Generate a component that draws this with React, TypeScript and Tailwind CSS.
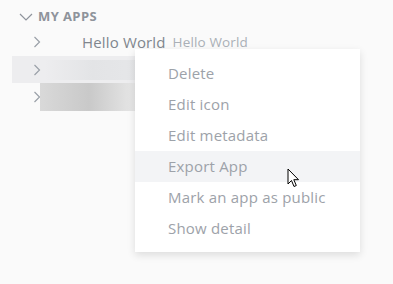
import React from "react";

const ChevronRight = () => (
  <svg width="8" height="12" viewBox="0 0 8 12" fill="none" stroke="#9aa0a8" strokeWidth="1.2">
    <path d="M1.5 1 L6.5 6 L1.5 11" />
  </svg>
);

const ChevronDown = () => (
  <svg width="14" height="8" viewBox="0 0 14 8" fill="none" stroke="#8f949c" strokeWidth="1.2">
    <path d="M1 1 L7 7 L13 1" />
  </svg>
);

const Cursor = () => (
  <svg width="14" height="21" viewBox="0 0 14 21">
    <path
      d="M1 1 L1 16 L4.5 12.5 L7 18.5 L9.3 17.5 L6.8 11.7 L11.5 11.7 Z"
      fill="white"
      stroke="black"
      strokeWidth="1"
      strokeLinejoin="round"
    />
  </svg>
);

const items = ["Delete", "Edit icon", "Edit metadata", "Export App", "Mark an app as public", "Show detail"];

export default function App() {
  return (
    <div
      className="relative w-[393px] h-[284px] bg-[#fafafa] overflow-hidden"
      style={{ fontFamily: '"Open Sans", "Noto Sans", sans-serif' }}
    >
      <div className="flex flex-col pt-[6px]">
        <div className="flex items-center h-[22px] pl-[19px] gap-[5px]">
          <ChevronDown />
          <span className="text-[13px] font-bold text-[#8e939b] tracking-[0.4px]">MY APPS</span>
        </div>
        <div className="flex items-center h-[28px] pl-[33px]">
          <ChevronRight />
          <span className="ml-[41px] text-[15px] tracking-[0.15px] text-[#80868e]">Hello World</span>
          <span className="ml-[7px] text-[13.5px] tracking-[0.15px] text-[#aab0b7]">Hello World</span>
        </div>
        <div className="flex items-center h-[27px] ml-[12px] w-[130px] bg-[#ededef] pl-[21px]">
          <ChevronRight />
          <div className="ml-[4px] h-[20px] w-[95px] bg-gradient-to-r from-[#ededef] via-[#e3e4e6] to-[#e6e7e9]" />
        </div>
        <div className="flex items-center h-[28px] pl-[33px]">
          <ChevronRight />
          <div className="h-[28px] w-[98px] -ml-[1px] bg-gradient-to-r from-[#d9d9d9] via-[#c9c9c9] to-[#e9e9e9]" />
        </div>
      </div>

      <div className="absolute left-[135px] top-[49px] w-[225px] bg-white pt-[9px] pb-[8px] shadow-[0_3px_8px_rgba(0,0,0,0.12)]">
        {items.map((t, i) => (
          <div
            key={t}
            className={`h-[31px] flex items-center pl-[33px] text-[15px] tracking-[0.2px] text-[#9da2a9] ${i === 3 ? "bg-[#f3f4f6]" : ""}`}
          >
            {t}
          </div>
        ))}
      </div>

      <div className="absolute left-[287px] top-[168px]">
        <Cursor />
      </div>
    </div>
  );
}
